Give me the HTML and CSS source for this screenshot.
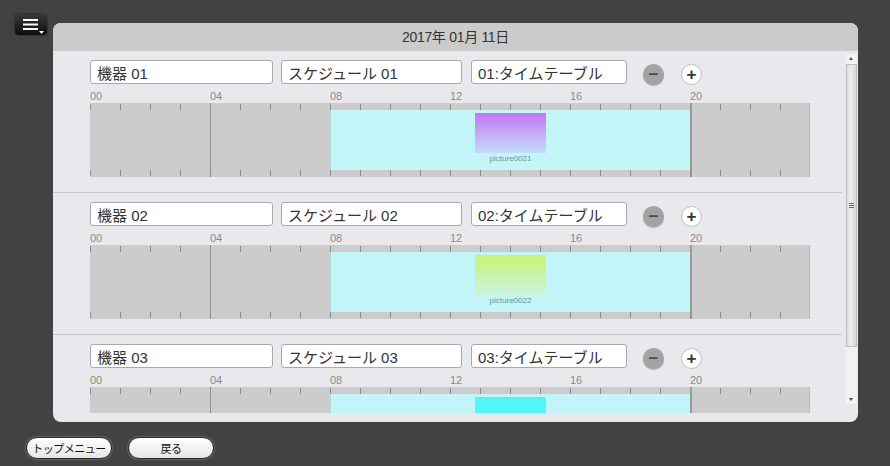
FILE: index.html
```html
<!DOCTYPE html>
<html lang="ja">
<head>
    <meta charset="UTF-8">
    <meta name="viewport" content="width=device-width, initial-scale=1.0">
    <title>スケジュール</title>
    <link rel="stylesheet" href="styles.css">
</head>
<body>

    <div class="menu-btn">
        <svg width="32" height="21" viewBox="0 0 32 21">
            <rect x="8" y="5" width="15" height="2" fill="#fff"/>
            <rect x="8" y="9.5" width="15" height="2" fill="#fff"/>
            <rect x="8" y="14" width="15" height="2" fill="#fff"/>
            <polygon points="24,17 29,17 26.5,20" fill="#fff"/>
        </svg>
    </div>

    <div class="panel">
        <div class="panel-head">2017年 01月 11日</div>
        <div class="panel-body">
            <div class="list">

                <div class="row">
                    <div class="fields">
                        <input class="f-device" type="text" value="機器 01">
                        <input class="f-schedule" type="text" value="スケジュール 01">
                        <input class="f-table" type="text" value="01:タイムテーブル">
                        <span class="btn-minus">−</span>
                        <span class="btn-plus">+</span>
                    </div>
                    <div class="scale">
                        <span>00</span><span>04</span><span>08</span><span>12</span><span>16</span><span>20</span>
                    </div>
                    <div class="bar">
                        <div class="ticks"></div>
                        <div class="mark" style="left:120px"></div>
                        <div class="slot" style="left:240px;width:360px"></div>
                        <div class="mark dark" style="left:600px"></div>
                        <div class="pic pic-purple" style="left:385px;width:71px"></div>
                        <div class="pic-name" style="left:385px;width:71px">picture0021</div>
                        <div class="ticks bottom"></div>
                    </div>
                </div>

                <div class="row">
                    <div class="fields">
                        <input class="f-device" type="text" value="機器 02">
                        <input class="f-schedule" type="text" value="スケジュール 02">
                        <input class="f-table" type="text" value="02:タイムテーブル">
                        <span class="btn-minus">−</span>
                        <span class="btn-plus">+</span>
                    </div>
                    <div class="scale">
                        <span>00</span><span>04</span><span>08</span><span>12</span><span>16</span><span>20</span>
                    </div>
                    <div class="bar">
                        <div class="ticks"></div>
                        <div class="mark" style="left:120px"></div>
                        <div class="slot" style="left:240px;width:360px"></div>
                        <div class="mark dark" style="left:600px"></div>
                        <div class="pic pic-green" style="left:385px;width:71px"></div>
                        <div class="pic-name" style="left:385px;width:71px">picture0022</div>
                        <div class="ticks bottom"></div>
                    </div>
                </div>

                <div class="row">
                    <div class="fields">
                        <input class="f-device" type="text" value="機器 03">
                        <input class="f-schedule" type="text" value="スケジュール 03">
                        <input class="f-table" type="text" value="03:タイムテーブル">
                        <span class="btn-minus">−</span>
                        <span class="btn-plus">+</span>
                    </div>
                    <div class="scale">
                        <span>00</span><span>04</span><span>08</span><span>12</span><span>16</span><span>20</span>
                    </div>
                    <div class="bar">
                        <div class="ticks"></div>
                        <div class="mark" style="left:120px"></div>
                        <div class="slot" style="left:240px;width:360px"></div>
                        <div class="mark dark" style="left:600px"></div>
                        <div class="pic pic-cyan" style="left:385px;width:71px"></div>
                        <div class="ticks bottom"></div>
                    </div>
                </div>

            </div>
            <div class="scrollbar">
                <div class="arrow-up"></div>
                <div class="track">
                    <div class="thumb"><span class="grip"></span></div>
                </div>
                <div class="arrow-down"></div>
            </div>
        </div>
    </div>

    <div class="footer">
        <button class="pill">トップメニュー</button>
        <button class="pill wide">戻る</button>
    </div>

</body>
</html>
```

FILE: styles.css
```css
body {
    margin: 0;
    width: 890px;
    height: 466px;
    background-color: #424242;
    font-family: 'Liberation Sans', 'Noto Sans CJK JP', sans-serif;
    position: relative;
    overflow: hidden;
}

.menu-btn {
    position: absolute;
    left: 15px;
    top: 14px;
    width: 32px;
    height: 21px;
    border-radius: 4px;
    background: linear-gradient(#3a3a3a, #0c0c0c);
    box-shadow: 0 0 2px rgba(0, 0, 0, 0.8);
    z-index: 2;
}

.menu-btn svg {
    display: block;
}

.panel {
    margin: 23px 0 0 53px;
    width: 805px;
    height: 399px;
    background-color: #e9e8ed;
    border-radius: 8px;
    overflow: hidden;
    display: flex;
    flex-direction: column;
}

.panel-head {
    height: 28px;
    line-height: 28px;
    background-color: #cbcbcb;
    text-align: center;
    font-size: 14px;
    color: #333;
    letter-spacing: -0.3px;
}

.panel-body {
    height: 362px;
    display: flex;
}

.list {
    flex: 1;
    overflow: hidden;
}

.row {
    height: 142px;
    box-sizing: border-box;
    padding: 9px 0 0 37px;
    border-bottom: 1px solid #c6c6c9;
}

.fields {
    display: flex;
    align-items: center;
    height: 24px;
}

.fields input {
    height: 24px;
    box-sizing: border-box;
    border: 1px solid #a9a9a9;
    border-radius: 3px;
    background: #fff;
    padding: 0 6px;
    font-family: 'Liberation Sans', 'Noto Sans CJK JP', sans-serif;
    font-size: 15px;
    color: #333;
    margin: 0;
}

.f-device {
    width: 183px;
    margin-right: 8px !important;
}

.f-schedule {
    width: 181px;
    margin-right: 9px !important;
}

.f-table {
    width: 156px;
}

.btn-minus,
.btn-plus {
    width: 21px;
    height: 21px;
    border-radius: 50%;
    display: flex;
    align-items: center;
    justify-content: center;
    font-weight: bold;
    font-size: 17px;
    line-height: 1;
    margin-top: 4px;
}

.btn-minus {
    margin-left: 16px;
    background: #a3a3a3;
    color: #4a4a4a;
    box-shadow: 0 1px 1px rgba(0, 0, 0, 0.25);
}

.btn-plus {
    margin-left: 17px;
    background: #fff;
    color: #333;
    border: 1px solid #bdbdbd;
    box-sizing: border-box;
}

.scale {
    display: flex;
    height: 19px;
    box-sizing: border-box;
    padding-top: 6px;
    font-size: 11px;
    line-height: 12px;
    color: #8a8a8a;
}

.scale span {
    width: 120px;
    margin-left: -1px;
    padding-left: 1px;
}

.bar {
    position: relative;
    width: 720px;
    height: 74px;
    background-color: #cccccc;
    border-right: 1px solid #bcbcbc;
    box-sizing: border-box;
}

.ticks {
    height: 7px;
    background: repeating-linear-gradient(to right, #8c8c8c 0 1px, transparent 1px 30px);
    background-size: 100% 6px;
    background-repeat: no-repeat;
    background-position: 0 1px;
}

.ticks.bottom {
    position: absolute;
    left: 0;
    right: 0;
    bottom: 0;
    background-position: 0 0;
}

.mark {
    position: absolute;
    top: 0;
    bottom: 0;
    width: 1px;
    background: #8e8e8e;
}

.mark.dark {
    background: #9a9a9a;
    width: 2px;
}

.slot {
    position: absolute;
    top: 7px;
    height: 60px;
    background-color: #c2f4f8;
    border-left: 1px solid #a6dfe3;
    box-sizing: border-box;
}

.pic {
    position: absolute;
    top: 10px;
    height: 40px;
}

.pic-purple {
    background: linear-gradient(#c276f6, #c4ddf7);
}

.pic-green {
    background: linear-gradient(#c9f274, #cbf3df);
}

.pic-cyan {
    background: #52f5f8;
}

.pic-name {
    position: absolute;
    top: 50px;
    text-align: center;
    font-size: 8px;
    line-height: 12px;
    color: #6c9498;
}

.scrollbar {
    width: 11px;
    margin: 3px 1px 9px 4px;
    background: #f2f2f2;
    display: flex;
    flex-direction: column;
}

.arrow-up,
.arrow-down {
    height: 9px;
    position: relative;
}

.arrow-up::after,
.arrow-down::after {
    content: "";
    position: absolute;
    left: 3px;
    border-left: 2.5px solid transparent;
    border-right: 2.5px solid transparent;
}

.arrow-up::after {
    top: 3px;
    border-bottom: 3px solid #505050;
}

.arrow-down::after {
    top: 3px;
    border-top: 3px solid #505050;
}

.track {
    flex: 1;
}

.thumb {
    height: 283px;
    margin-top: 1px;
    background: linear-gradient(to right, #dcdcdc, #ececec 40%, #d6d6d6);
    border: 1px solid #bdbdbd;
    box-sizing: border-box;
    display: flex;
    align-items: center;
    justify-content: center;
}

.grip {
    width: 5px;
    height: 5px;
    background: repeating-linear-gradient(#6a6a6a 0 1px, transparent 1px 2px);
}

.footer {
    display: flex;
    gap: 16px;
    padding: 15px 0 0 26px;
}

.pill {
    height: 22px;
    width: 86px;
    border-radius: 11px;
    border: 1px solid #2a2a2a;
    background: linear-gradient(#ffffff, #e6e6e6);
    box-shadow: 0 0 2px rgba(255, 255, 255, 0.6);
    font-family: 'Liberation Sans', 'Noto Sans CJK JP', sans-serif;
    font-size: 11px;
    color: #111;
    padding: 0;
    letter-spacing: -0.5px;
}
```
